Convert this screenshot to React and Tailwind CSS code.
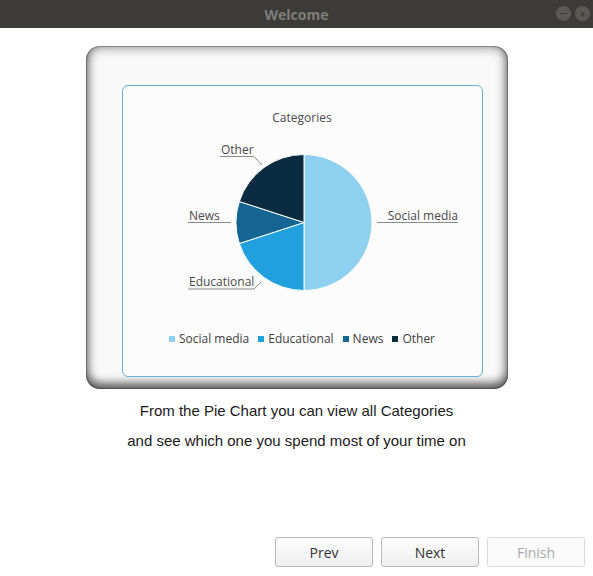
import React from 'react';

const slices = [
  { name: 'Social media', color: '#8fcfef', d: 'M181,137.5 L181,69.5 A68,68 0 0 1 181,205.5 Z' },
  { name: 'Educational', color: '#21a0de', d: 'M181,137.5 L181,205.5 A68,68 0 0 1 116.3,158.5 Z' },
  { name: 'News', color: '#146592', d: 'M181,137.5 L116.3,158.5 A68,68 0 0 1 116.3,116.5 Z' },
  { name: 'Other', color: '#0b2b40', d: 'M181,137.5 L116.3,116.5 A68,68 0 0 1 181,69.5 Z' },
];

const font = { fontFamily: '"Open Sans", "DejaVu Sans", sans-serif' };

const PieChart = () => (
  <svg viewBox="0 55 359 160" className="block w-[359px] h-[160px] mt-[14px]" style={font}>
    {slices.map((s) => (
      <path key={s.name} d={s.d} fill={s.color} stroke="#ffffff" strokeWidth="1" />
    ))}
    {/* leader lines */}
    <g stroke="#8a8a8a" strokeWidth="1" fill="none">
      <polyline points="97,71.5 131,71.5 139,80" />
      <polyline points="65,137.5 108,137.5" />
      <polyline points="254,137.5 335,137.5" />
      <polyline points="65,204 131,204 138,197" />
    </g>
    <g fill="#4a4a4a" fontSize="12">
      <text x="98" y="68.5">Other</text>
      <text x="66" y="134.5">News</text>
      <text x="335" y="134.5" textAnchor="end">Social media</text>
      <text x="66" y="201">Educational</text>
    </g>
  </svg>
);

const Button = ({ children, disabled }) => (
  <button
    disabled={disabled}
    className={`w-[98px] h-[30px] rounded-[3px] border text-[14px] font-medium ${
      disabled
        ? 'border-[#d9d9d9] bg-[#fafafa] text-[#a9a9a9]'
        : 'border-[#b8b8b8] bg-gradient-to-b from-[#fdfdfd] to-[#efefef] text-[#333333]'
    }`}
    style={font}
  >
    {children}
  </button>
);

export default function App() {
  return (
    <div className="w-[593px] h-[576px] flex flex-col bg-white overflow-hidden">
      {/* title bar */}
      <div className="h-[28px] bg-[#3c3b37] flex items-center relative shrink-0">
        <div className="flex-1 text-center text-[14px] font-bold text-[#7f7e79]" style={font}>
          Welcome
        </div>
        <div className="absolute right-[3px] top-[6px] flex gap-[4px]">
          <div className="w-[15px] h-[15px] rounded-full bg-[#5a5955] flex items-center justify-center">
            <div className="w-[7px] h-[1.5px] bg-[#3c3b37]" />
          </div>
          <div className="w-[15px] h-[15px] rounded-full bg-[#5a5955] flex items-center justify-center text-[#3c3b37] text-[10px] leading-none font-bold">
            ×
          </div>
        </div>
      </div>

      {/* picture frame */}
      <div className="mt-[18px] mx-auto w-[422px] h-[343px] rounded-[14px] bg-[#f9f9f9] pt-[39px] pl-[36px] pr-[25px] pb-[12px] shadow-[inset_0_0_0_1px_rgba(0,0,0,0.25),inset_0_-6px_10px_rgba(0,0,0,0.5),inset_0_0_12px_1px_rgba(0,0,0,0.45)]">
        <div className="w-full h-full rounded-[6px] border border-[#62b3d9] bg-[#fcfcfc] flex flex-col items-center">
          <div className="mt-[23px] text-[12px] leading-[17px] text-[#4a4a4a]" style={font}>
            Categories
          </div>
          <PieChart />
          <div className="mt-[30px] flex items-center gap-[9px] text-[12px] leading-[17px] text-[#404040]" style={font}>
            {slices.map((s) => (
              <div key={s.name} className="flex items-center gap-[4px]">
                <span className="w-[6px] h-[6px] inline-block" style={{ backgroundColor: s.color }} />
                <span>{s.name}</span>
              </div>
            ))}
          </div>
        </div>
      </div>

      {/* description */}
      <div className="mt-[7px] text-center text-[15px] leading-[30px] text-[#1a1a1a]" style={{ fontFamily: '"Liberation Sans", Arial, sans-serif' }}>
        <div>From the Pie Chart you can view all Categories</div>
        <div>and see which one you spend most of your time on</div>
      </div>

      <div className="flex-1" />

      <div className="flex justify-end gap-[8px] pr-[8px] pb-[9px]">
        <Button>Prev</Button>
        <Button>Next</Button>
        <Button disabled>Finish</Button>
      </div>
    </div>
  );
}
